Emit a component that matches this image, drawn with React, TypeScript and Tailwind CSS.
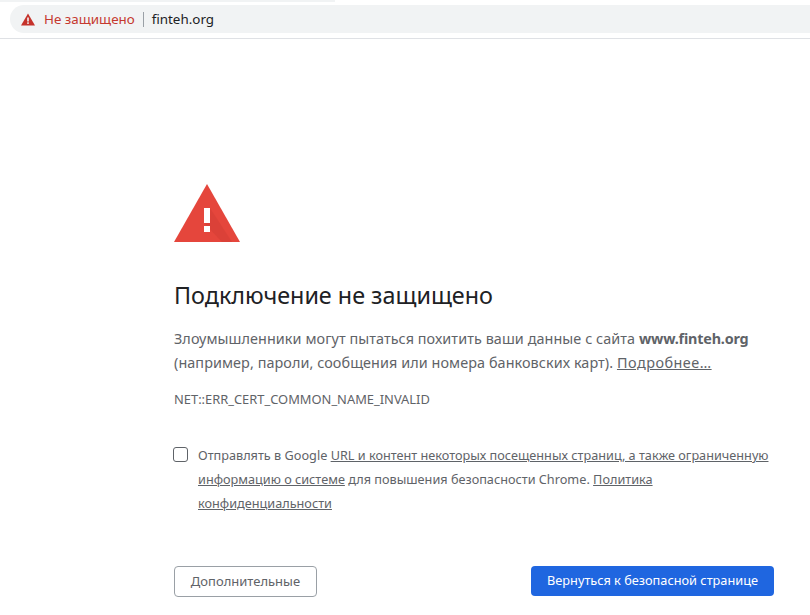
export default function App() {
  return (
    <div className="w-[810px] h-[615px] overflow-hidden bg-white flex flex-col font-['Noto_Sans',sans-serif] text-[#5f6368]">
      <div className="h-[39px] shrink-0 border-b border-[#dfe1e5] flex flex-col">
        <div className="h-[2px] w-[335px] bg-[#f1f3f4] shrink-0" />
        <div className="mt-[3px] ml-[10px] h-[28px] bg-[#f1f3f4] rounded-l-[14px] flex items-center pl-[11px]">
          <svg width="14" height="13" viewBox="0 0 14 13" className="shrink-0">
            <path d="M7 0.5 L14 12.5 H0 Z" fill="#c5322b" />
            <rect x="6.2" y="4.5" width="1.6" height="4" fill="#f1f3f4" />
            <rect x="6.2" y="9.3" width="1.6" height="1.6" fill="#f1f3f4" />
          </svg>
          <span className="ml-[9px] text-[13.4px] text-[#c5392f]">Не защищено</span>
          <span className="ml-[8px] w-px h-[15px] bg-[#9aa0a6]" />
          <span className="ml-[8px] text-[13.4px] text-[#202124]">finteh.org</span>
        </div>
      </div>
      <div className="pl-[174px] pr-[36px] flex flex-col flex-1">
        <svg width="66" height="58" viewBox="0 0 66 58" className="mt-[145px] shrink-0">
          <path d="M33 0 L66 58 H0 Z" fill="#e5463c" />
          <path d="M36 24 L58 58 H48 L31 40 Z" fill="#c93a31" opacity="0.35" />
          <rect x="30" y="24" width="6" height="15" fill="#fff" />
          <rect x="30" y="42" width="6" height="6" fill="#fff" />
        </svg>
        <h1 className="mt-[37px] text-[23.35px] leading-[32px] text-[#202124] font-normal">Подключение не защищено</h1>
        <p className="mt-[16px] text-[14.4px] leading-[24px] text-[#5f6368] whitespace-nowrap">
          <span className="tracking-[0.07px]">Злоумышленники могут пытаться похитить ваши данные с сайта </span><b className="font-bold tracking-[-0.2px]">www.finteh.org</b>
          <br />
          <span className="tracking-[0.07px]">(например, пароли, сообщения или номера банковских карт). </span><span className="underline tracking-[0.5px]">Подробнее…</span>
        </p>
        <p className="mt-[16px] text-[12.9px] leading-[16px] text-[#5f6368]">NET::ERR_CERT_COMMON_NAME_INVALID</p>
        <div className="mt-[36px] flex items-start -ml-px">
          <span className="mt-[4px] w-[15px] h-[15px] border border-[#5f6368] rounded-[3px] shrink-0" />
          <p className="ml-[10px] text-[12.7px] leading-[24px] text-[#5f6368] whitespace-nowrap">
            Отправлять в Google <span className="underline">URL и контент некоторых посещенных страниц, а также ограниченную</span>
            <br />
            <span className="underline">информацию о системе</span> для повышения безопасности Chrome. <span className="underline">Политика</span>
            <br />
            <span className="underline">конфиденциальности</span>
          </p>
        </div>
        <div className="mt-[51px] flex items-start justify-between">
          <button className="w-[143px] h-[31px] border border-[#9aa0a6] rounded-[4px] text-[13px] text-[#5f6368] bg-white">Дополнительные</button>
          <button className="w-[243px] h-[30px] rounded-[4px] text-[12.75px] text-white bg-[#1f66e0]">Вернуться к безопасной странице</button>
        </div>
      </div>
    </div>
  );
}
